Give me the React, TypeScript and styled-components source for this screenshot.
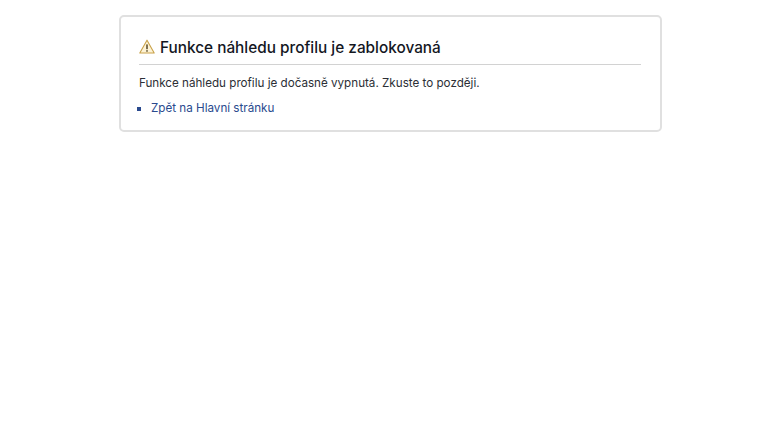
import React from 'react';
import styled, { createGlobalStyle } from 'styled-components';

const GlobalStyle = createGlobalStyle`
  html, body {
    margin: 0;
    padding: 0;
    background-color: #fff;
    font-family: Inter, "Liberation Sans", sans-serif;
  }
`;

const Page = styled.div`
  width: 760px;
  height: 432px;
  padding: 15px 0 0 119px;
  box-sizing: border-box;
  overflow: hidden;
`;

const Card = styled.div`
  width: 543px;
  height: 117px;
  box-sizing: border-box;
  padding: 19px 19px 0 18px;
  border: 2px solid #e0e0e0;
  border-radius: 5px;
`;

const Heading = styled.h1`
  display: flex;
  align-items: flex-start;
  gap: 5px;
  height: 28px;
  margin: 0 0 9px;
  border-bottom: 1px solid #d2d2d2;
  font-size: 15.35px;
  line-height: 24px;
  font-weight: 500;
  color: #14171f;
`;

const WarningIcon = styled.svg`
  width: 16px;
  height: 15px;
  margin-top: 3px;
  flex-shrink: 0;
`;

const Message = styled.p`
  margin: 0 0 7px;
  font-size: 11.65px;
  line-height: 18px;
  color: #2c2f36;
`;

const LinkList = styled.ul`
  list-style: none;
  margin: 0;
  padding: 0 0 0 12px;
`;

const LinkItem = styled.li`
  position: relative;
  font-size: 11.65px;
  line-height: 18px;

  &::before {
    content: '';
    position: absolute;
    left: -14px;
    top: 8px;
    width: 3.5px;
    height: 3.5px;
    background-color: #2a4a8e;
  }
`;

const BackLink = styled.a`
  color: #2a4a8e;
  text-decoration: none;
`;

const App: React.FC = () => {
  return (
    <Page>
      <GlobalStyle />
      <Card>
        <Heading>
          <WarningIcon viewBox="0 0 16 15" aria-hidden="true">
            <path
              d="M8 1.2 L15.2 14 H0.8 Z"
              fill="#fdf3d6"
              stroke="#c9a24a"
              strokeWidth="1.1"
              strokeLinejoin="round"
            />
            <rect x="7.3" y="5.4" width="1.4" height="4.8" fill="#4a3a14" />
            <rect x="7.3" y="11.2" width="1.4" height="1.5" fill="#4a3a14" />
          </WarningIcon>
          Funkce náhledu profilu je zablokovaná
        </Heading>
        <Message>Funkce náhledu profilu je dočasně vypnutá. Zkuste to později.</Message>
        <LinkList>
          <LinkItem>
            <BackLink href="#">Zpět na Hlavní stránku</BackLink>
          </LinkItem>
        </LinkList>
      </Card>
    </Page>
  );
};

export default App;
